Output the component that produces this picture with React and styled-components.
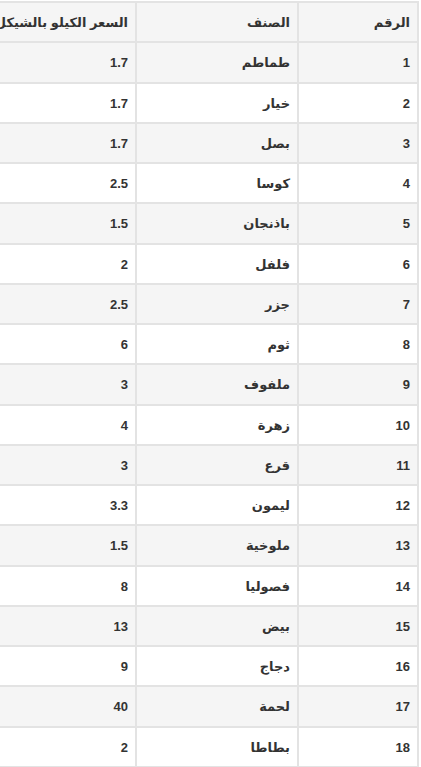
import styled, { createGlobalStyle } from "styled-components";

const rows = [
    ["طماطم", "1.7"],
    ["خيار", "1.7"],
    ["بصل", "1.7"],
    ["كوسا", "2.5"],
    ["باذنجان", "1.5"],
    ["فلفل", "2"],
    ["جزر", "2.5"],
    ["ثوم", "6"],
    ["ملفوف", "3"],
    ["زهرة", "4"],
    ["قرع", "3"],
    ["ليمون", "3.3"],
    ["ملوخية", "1.5"],
    ["فصوليا", "8"],
    ["بيض", "13"],
    ["دجاج", "9"],
    ["لحمة", "40"],
    ["بطاطا", "2"],
];

//price list table, right to left, wider than the screen
const App = () => {
    return (
        <>
            <Global />
            <Wrapper>
                <Table>
                    <colgroup>
                        <col style={{ width: 120 }} />
                        <col style={{ width: 162 }} />
                        <col style={{ width: 180 }} />
                    </colgroup>
                    <thead>
                        <Row $striped>
                            <Head>الرقم</Head>
                            <Head>الصنف</Head>
                            <Head>السعر الكيلو بالشيكل</Head>
                        </Row>
                    </thead>
                    <tbody>
                        {rows.map(([name, price], i) => (
                            <Row key={i} $striped={i % 2 === 0}>
                                <Cell>{i + 1}</Cell>
                                <Cell>{name}</Cell>
                                <Cell>{price}</Cell>
                            </Row>
                        ))}
                    </tbody>
                </Table>
            </Wrapper>
        </>
    );
};

//--- Styling ---

const Global = createGlobalStyle`
body {
    margin: 0;
    background: #ffffff;
    font-family: "Liberation Sans", "DejaVu Sans", sans-serif;
    color: #333333;
}
`;

const Wrapper = styled.div`
direction: rtl;
overflow: hidden;
padding-right: 2px;
`;

const Table = styled.table`
border-collapse: collapse;
table-layout: fixed;
width: 462px;
margin-top: 1px;
`;

const Row = styled.tr`
background: ${(p) => (p.$striped ? "#f5f5f5" : "#ffffff")};
`;

const Head = styled.th`
border: 2px solid #e3e3e3;
padding: 12px 7px 11px;
height: 15.25px;
line-height: 15px;
font-size: 13px;
font-weight: bold;
text-align: right;
white-space: nowrap;
overflow: hidden;
`;

const Cell = styled.td`
border: 2px solid #e3e3e3;
padding: 12px 7px 11px;
height: 15.25px;
line-height: 15px;
font-size: 13px;
font-weight: bold;
text-align: right;
white-space: nowrap;
`;

export default App;
